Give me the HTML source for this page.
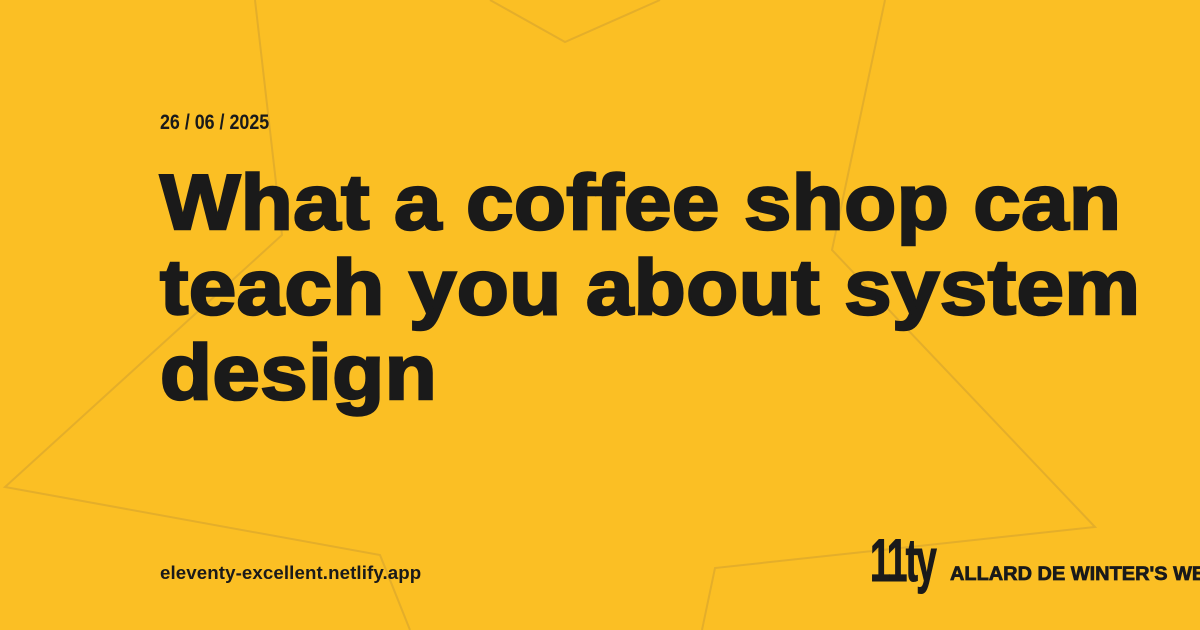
<!DOCTYPE html>
<html><head><style>
html,body{margin:0;padding:0}
body{width:1200px;height:630px;background:#fbbf24;position:relative;overflow:hidden;font-family:"Liberation Sans",sans-serif;color:#1a1a1a}
svg{position:absolute;left:0;top:0}
.date{position:absolute;left:160px;top:111px;font-size:21px;font-weight:bold;transform:scaleX(0.85);transform-origin:left;white-space:nowrap}
h1{position:absolute;left:160px;top:160px;margin:0;font-size:78px;line-height:85px;font-weight:900;letter-spacing:0.5px;width:960px;-webkit-text-stroke:2.5px #1a1a1a;transform:scaleX(1.09);transform-origin:left}
.url{position:absolute;left:160px;top:562px;font-size:18.7px;font-weight:bold;white-space:nowrap;letter-spacing:0.1px}
.logo{position:absolute;left:870px;top:526px;font-weight:bold;font-size:60px;letter-spacing:-3px;transform:scaleX(0.62);transform-origin:left;-webkit-text-stroke:1px #1a1a1a}
.site{position:absolute;left:950px;top:564px;font-size:19px;font-weight:900;white-space:nowrap;-webkit-text-stroke:0.7px #1a1a1a;transform:scaleX(1.05);transform-origin:left}
</style></head><body>
<svg width="1200" height="630">
<g fill="none" stroke="#e4ae2a" stroke-width="2">
<polyline points="255,0 282,235 5,487 380,555 410,630"/>
<polyline points="490,0 565,42 660,0"/>
<polyline points="885,0 832,250 1095,527 715,568 702,630"/>
</g>
</svg>
<div class="date">26 / 06 / 2025</div>
<h1>What a coffee shop can teach you about system design</h1>
<div class="url">eleventy-excellent.netlify.app</div>
<div class="logo">11ty</div>
<div class="site">ALLARD DE WINTER'S WEB</div>
</body></html>
